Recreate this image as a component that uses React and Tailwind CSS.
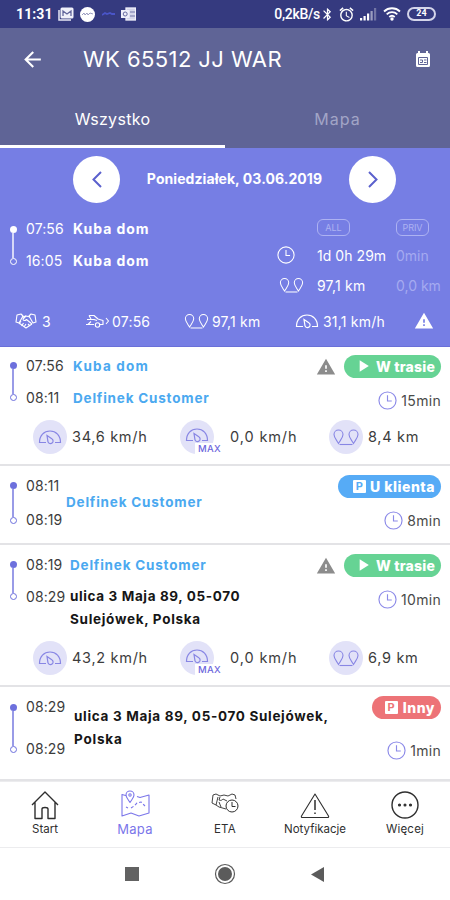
import React from "react";
import clsx from "clsx";
import { MdArrowBack, MdBluetooth, MdAlarm, MdWarning, MdPlayArrow } from "react-icons/md";

const trips = [
  {
    start: "07:56",
    end: "08:11",
    lines: [
      { text: "Kuba dom", className: "text-[#4ba9f0] tracking-[1.2px]" },
      { text: "Delfinek Customer", className: "text-[#4ba9f0] tracking-[0.8px] mt-[9px]" },
    ],
    namesClass: "left-[73px] top-[8px]",
    timesClass: "gap-[10px] pt-[8px]",
    lineClass: "h-[39px] mt-[15px]",
    rightClass: "pt-[8px] gap-[12px]",
    className: "h-[119px]",
    status: "route",
    duration: "15min",
    stats: ["34,6 km/h", "0,0 km/h", "8,4 km"],
  },
  {
    start: "08:11",
    end: "08:19",
    lines: [{ text: "Delfinek Customer", className: "text-[#4ba9f0] tracking-[0.8px]" }],
    namesClass: "left-[66px] top-[25px]",
    timesClass: "gap-[12px] pt-[9px]",
    lineClass: "h-[42px] mt-[16px]",
    rightClass: "pt-[9px] gap-[12px]",
    className: "h-[79px]",
    status: "client",
    duration: "8min",
  },
  {
    start: "08:19",
    end: "08:29",
    lines: [
      { text: "Delfinek Customer", className: "text-[#4ba9f0] tracking-[0.8px]" },
      { text: "ulica 3 Maja 89, 05-070", className: "text-[#161616] tracking-[0.62px] mt-[8px]" },
      { text: "Sulejówek, Polska", className: "text-[#161616] tracking-[0.7px]" },
    ],
    namesClass: "left-[70px] top-[9px]",
    timesClass: "gap-[10px] pt-[9px]",
    lineClass: "h-[39px] mt-[16px]",
    rightClass: "pt-[9px] gap-[12px]",
    className: "h-[142px]",
    status: "route",
    duration: "10min",
    stats: ["43,2 km/h", "0,0 km/h", "6,9 km"],
  },
  {
    start: "08:29",
    end: "08:29",
    lines: [
      { text: "ulica 3 Maja 89, 05-070 Sulejówek,", className: "text-[#161616] tracking-[0.68px]" },
      { text: "Polska", className: "text-[#161616] tracking-[0.8px]" },
    ],
    namesClass: "left-[74px] top-[18px]",
    timesClass: "gap-[20px] pt-[9px]",
    lineClass: "h-[49px] mt-[17px]",
    rightClass: "pt-[9px] gap-[21px]",
    className: "h-[94px]",
    status: "other",
    duration: "1min",
  },
];

const pills = {
  route: { text: "W trasie", className: "bg-[#66d394] w-[97px] tracking-[0.2px]" },
  client: { text: "U klienta", className: "bg-[#56abf6] w-[103px] tracking-[0.5px]" },
  other: { text: "Inny", className: "bg-[#ed7377] w-[69px] tracking-[0.5px]" },
};

function Clock({ size = 19, className }) {
  return (
    <svg width={size} height={size} viewBox="0 0 20 20" fill="none" stroke="currentColor" strokeWidth="1.2" className={className}>
      <circle cx="10" cy="10" r="9" />
      <path d="M10 4.5V10.5H14.5" />
    </svg>
  );
}

function Gauge({ className }) {
  return (
    <svg width="24" height="16" viewBox="0 0 24 16" fill="none" stroke="currentColor" strokeWidth="1.2" className={className}>
      <path d="M8 13.5H1.5C1.5 6.5 6 2 12 2s10.500 4.500 10.500 11.500H17" />
      <path d="M9 6.500l4.800 3.300a2.600 2.600 0 1 1-3.800 3z" />
    </svg>
  );
}

function Pins({ width = 25 }) {
  return (
    <svg width={width} height="17" viewBox="0 0 27 17" fill="none" stroke="currentColor" strokeWidth="1.1">
      <path d="M6 14.500C4 11 1.500 8.500 1.500 5.500a4.500 4.500 0 0 1 9 0C10.500 8.500 8 11 6 14.500z" />
      <path d="M21 14.500c-2-3.500-4.500-6-4.500-9a4.500 4.500 0 0 1 9 0c0 3-2.500 5.500-4.500 9z" />
      <path d="M7 15.500h13" />
    </svg>
  );
}

function Handshake() {
  return (
    <svg width="24" height="16" viewBox="0 0 24 16" fill="none" stroke="currentColor" strokeWidth="1.1" strokeLinejoin="round">
      <path d="M3 2l4-1 2 2-4 7-3-1z" />
      <path d="M21 2l-4-1-2 2 4 7 3-1z" />
      <path d="M8 4l4-1 4 1M12 3L9 6c0 2 2 2 3.500.5L18 11" />
      <path d="M5 10l7 5 6-4M7 8l-2 3M9.500 10l-2 3M12 11l-2 3M14 11l2 2" />
    </svg>
  );
}

function CarHand() {
  return (
    <svg width="25" height="16" viewBox="0 0 25 16" fill="none" stroke="currentColor" strokeWidth="1.1" strokeLinejoin="round">
      <path d="M4 2.500h5l4 3.500 5 1.500v4h-3M4 2.500l2 3.500M2 6.500h7l3 1M1 11.500h8M3 11.500l3-3" />
      <circle cx="12.500" cy="12" r="2.200" />
      <path d="M21 5l2.500 3-2.500 3" />
    </svg>
  );
}

function ParkingIcon({ className }) {
  return (
    <span className={clsx("flex h-[13px] w-[13px] items-center justify-center rounded-[1px] bg-white text-[11px] font-bold leading-none", className)}>
      P
    </span>
  );
}

function StatusBar() {
  return (
    <div className="flex h-7 items-center bg-[#353a7f] pl-4 pr-[14px] text-white">
      <span className="w-[36px] font-[Roboto] text-[14px] font-bold tracking-[0.1px]">11:31</span>
      <svg width="16" height="14" viewBox="0 0 16 14" className="ml-[6px]">
        <path d="M1 3v10h12" fill="none" stroke="#e8e8f6" strokeWidth="1.500" />
        <rect x="2.500" y="0.500" width="13" height="11" rx="1.500" fill="#f0f0fa" />
        <path d="M5 9V4l4 3 4-3v5" fill="none" stroke="#62669c" strokeWidth="1.300" />
      </svg>
      <span className="ml-[6px] flex h-[15px] w-[15px] items-center justify-center rounded-full bg-white">
        <svg width="11" height="5" viewBox="0 0 11 5" fill="none" stroke="#9a9cc0" strokeWidth="1">
          <path d="M0 3l2-2 1 2 2-2 1 2 2-2 3 1" />
        </svg>
      </span>
      <svg width="13" height="6" viewBox="0 0 13 6" className="ml-[7px]" fill="none" stroke="#4a55c8" strokeWidth="1.800">
        <path d="M0 4l3-2 2 1 3-1 2 1h3" />
      </svg>
      <svg width="15" height="14" viewBox="0 0 15 14" className="ml-[6px]">
        <rect x="5" y="1" width="9.500" height="12" fill="#d4d5ea" stroke="#f0f0fa" strokeWidth="1.300" />
        <path d="M9 5h5M9 9h5" stroke="#7175a8" />
        <rect y="3" width="8.500" height="8" fill="#f0f0fa" />
        <circle cx="4.200" cy="7" r="2" fill="none" stroke="#6669a0" />
      </svg>
      <span className="ml-auto font-[Roboto] text-[14px] font-medium tracking-[-0.3px]">0,2kB/s</span>
      <MdBluetooth size={15} />
      <MdAlarm size={17} className="ml-[3px]" />
      <svg width="17" height="13" viewBox="0 0 17 13" className="ml-[5px]" fill="white">
        <rect x="0" y="10" width="2.200" height="2.500" />
        <rect x="3.500" y="8" width="2.200" height="4.500" />
        <rect x="7" y="5.500" width="2.200" height="7" />
        <rect x="10.500" y="3" width="2.200" height="9.500" opacity="0.500" />
        <rect x="14" y="0" width="2.200" height="12.500" opacity="0.300" />
      </svg>
      <svg width="18" height="14" viewBox="0 0 18 14" className="ml-[6px]" fill="none" stroke="white" strokeWidth="1.800">
        <path d="M1 4.500a11.500 11.500 0 0 1 16 0M3.700 7.300a7.600 7.600 0 0 1 10.600 0M6.300 10a4 4 0 0 1 5.400 0" />
        <circle cx="9" cy="12" r="0.800" fill="white" />
      </svg>
      <span className="ml-[6px] flex h-[14px] w-[29px] items-center justify-center rounded-full border-2 border-[#d4d5ea] font-[Roboto] text-[9px] font-bold">
        24
      </span>
    </div>
  );
}

function Header() {
  return (
    <header className="flex h-[120px] flex-col bg-[#5f6496] text-white">
      <div className="flex h-[63px] items-center pl-[20px] pr-[19px]">
        <MdArrowBack size={25} />
        <h1 className="ml-[38px] whitespace-nowrap text-[22px] font-normal tracking-[0.42px]">WK 65512 JJ WAR</h1>
        <svg width="16" height="17" viewBox="0 0 16 17" className="ml-auto">
          <path d="M2.500 2h11a1.500 1.500 0 0 1 1.500 1.500v11a1.500 1.500 0 0 1-1.500 1.500h-11A1.500 1.500 0 0 1 1 14.500v-11A1.500 1.500 0 0 1 2.500 2z" fill="white" />
          <path d="M4 0v3M12 0v3" stroke="white" strokeWidth="2" />
          <path d="M3.500 6.500h9v7h-9zM5 9h2.500v2.500H5M9 9h2.500M9 11.500h2.500" fill="none" stroke="#5f6496" />
        </svg>
      </div>
      <div className="flex flex-1 text-[16px]">
        <div className="flex w-1/2 items-center justify-center border-b-[3px] border-white pt-[1px] tracking-[0.3px]">Wszystko</div>
        <div className="flex w-1/2 items-center justify-center pb-[2px] text-[#a2a5c6] tracking-[1px]">Mapa</div>
      </div>
    </header>
  );
}

function Timeline({ className, light }) {
  return (
    <div className={clsx("flex w-[8px] shrink-0 flex-col items-center", light ? "text-white" : "text-[#6d70dd]", className)}>
      <span className="h-[7px] w-[7px] shrink-0 rounded-full bg-current" />
      <span className="w-[1.5px] flex-1 bg-current opacity-70" />
      <span className="h-[7px] w-[7px] shrink-0 rounded-full border border-current" />
    </div>
  );
}

function RoundButton({ next }) {
  return (
    <button className="flex h-[47px] w-[47px] items-center justify-center rounded-full bg-white text-[#5b60cd]">
      <svg width="10" height="17" viewBox="0 0 10 17" fill="none" stroke="currentColor" strokeWidth="2">
        <path d={next ? "M1 1l7.500 7.500L1 16" : "M9 1L1.500 8.500 9 16"} />
      </svg>
    </button>
  );
}

function Summary() {
  return (
    <section className="flex h-[199px] flex-col border-b border-[#6a70d8] bg-[#767ee4] text-white">
      <div className="flex items-center justify-between pl-[73px] pr-[54px] pt-[8px]">
        <RoundButton />
        <p className="whitespace-nowrap pb-[3px] text-[14px] font-bold tracking-[0.07px]">Poniedziałek, 03.06.2019</p>
        <RoundButton next />
      </div>
      <div className="flex h-[96px] pl-[9px] pt-[12px]">
        <Timeline light className="mt-[11px] h-[39px]" />
        <div className="ml-[9px] flex w-[47px] flex-col gap-[10px] pt-[3px] text-[14px] leading-[22px] tracking-[0.1px]">
          <span>07:56</span>
          <span>16:05</span>
        </div>
        <div className="flex flex-col gap-[10px] pt-[3px] text-[14px] font-bold leading-[22px] tracking-[0.95px]">
          <span>Kuba dom</span>
          <span>Kuba dom</span>
        </div>
        <div className="ml-auto mr-[5px] grid grid-cols-[40px_79px_49px] grid-rows-[25px_30px_30px] items-center whitespace-nowrap text-[14px]">
          <span />
          <span className="flex h-[17px] w-[33px] items-center justify-center rounded-[6px] border border-[#adb2f2] text-[9px] text-[#adb2f2]">ALL</span>
          <span className="flex h-[17px] w-[33px] items-center justify-center rounded-[6px] border border-[#adb2f2] text-[9px] text-[#adb2f2]">PRIV</span>
          <Clock size={18} />
          <span className="tracking-[0.05px]">1d 0h 29m</span>
          <span className="text-[#a5aaf0]">0min</span>
          <span className="pl-[2px]"><Pins width={25} /></span>
          <span className="tracking-[0.2px]">97,1 km</span>
          <span className="text-[#a5aaf0]">0,0 km</span>
        </div>
      </div>
      <div className="mt-[9px] grid h-[26px] grid-cols-[71px_99px_111px_118px_1fr] items-center whitespace-nowrap pl-[14px] text-[14px] tracking-[0.2px]">
        <span className="flex items-center gap-[4px]"><Handshake />3</span>
        <span className="flex items-center gap-[2px]"><CarHand />07:56</span>
        <span className="flex items-center gap-[3px]"><Pins width={25} />97,1 km</span>
        <span className="flex items-center gap-[4px]"><Gauge />31,1 km/h</span>
        <MdWarning size={20} className="ml-[1px]" />
      </div>
    </section>
  );
}

function Stat({ type, text }) {
  return (
    <div className="flex items-center gap-[5px]">
      <span className="relative flex h-[34px] w-[34px] shrink-0 items-center justify-center rounded-full bg-[#e2e2f8] text-[#8886e4]">
        {type === "distance" ? <Pins width={28} /> : <Gauge className={type === "max" ? "mb-[4px]" : undefined} />}
        {type === "max" && (
          <span className="absolute left-[15px] top-[23px] bg-white px-[3px] text-[9.5px] font-medium leading-[12px] tracking-[0.3px] text-[#6c66dc]">MAX</span>
        )}
      </span>
      <span className={clsx("whitespace-nowrap pb-[1px] text-[14.5px] text-[#3c3c3c]", type === "max" ? "ml-[11px] tracking-[0.9px]" : "tracking-[0.7px]")}>{text}</span>
    </div>
  );
}

function Pill({ status }) {
  const pill = pills[status];
  return (
    <span className={clsx("flex h-[23px] items-center justify-end whitespace-nowrap rounded-full pr-[6px] pb-[1px] text-[14px] font-extrabold text-white", pill.className)}>
      {status === "route" && <MdPlayArrow size={20} className="mr-[3px]" />}
      {status === "client" && <ParkingIcon className="mr-[4px] text-[#56abf6]" />}
      {status === "other" && <ParkingIcon className="mr-[5px] text-[#ed7377]" />}
      {pill.text}
    </span>
  );
}

function Trip({ trip }) {
  return (
    <article className={clsx("relative border-b-2 border-[#e3e3e6] bg-white", trip.className)}>
      <div className="flex pl-[9px] pr-[9px]">
        <Timeline className={trip.lineClass} />
        <div className={clsx("ml-[9px] flex flex-col text-[14px] leading-[22px] tracking-[0.1px] text-[#3c3c3c]", trip.timesClass)}>
          <span>{trip.start}</span>
          <span>{trip.end}</span>
        </div>
        <div className={clsx("absolute flex flex-col whitespace-nowrap text-[13.5px] font-bold leading-[23px]", trip.namesClass)}>
          {trip.lines.map((line) => (
            <span key={line.text} className={line.className}>{line.text}</span>
          ))}
        </div>
        <div className={clsx("ml-auto flex flex-col items-end", trip.rightClass)}>
          <div className="flex items-center gap-[8px]">
            {trip.status === "route" && <MdWarning size={20} className="text-[#8c8c8c]" />}
            <Pill status={trip.status} />
          </div>
          <span className="flex h-[20px] items-center gap-[4px] text-[14px] tracking-[0.3px] text-[#4a4a4a]">
            <Clock className="text-[#8c8ae8]" />
            {trip.duration}
          </span>
        </div>
      </div>
      {trip.stats && (
        <div className="absolute bottom-[10px] left-[33px] grid grid-cols-[147px_149px_1fr]">
          <Stat text={trip.stats[0]} />
          <Stat type="max" text={trip.stats[1]} />
          <Stat type="distance" text={trip.stats[2]} />
        </div>
      )}
    </article>
  );
}

function NavItem({ label, active, className, children }) {
  return (
    <div className={clsx("flex flex-1 flex-col items-center pt-[7px]", active ? "text-[#7b76ea]" : "text-[#2f2f2f]")}>
      <svg width="32" height="32" viewBox="0 0 32 32" fill="none" stroke="currentColor" strokeWidth="1.1" strokeLinejoin="round">
        {children}
      </svg>
      <span className={clsx("whitespace-nowrap leading-[16px]", className)}>{label}</span>
    </div>
  );
}

function BottomNav() {
  return (
    <nav className="flex h-[67px] border-b border-t border-[#ececee] bg-white">
      <NavItem label="Start" className="text-[11.5px]">
        <path d="M3 16L16 3l13 13M6 13.500V29.500h7V20c0-2 6-2 6 0v9.500h7V13.500" strokeWidth="1.400" />
      </NavItem>
      <NavItem label="Mapa" active className="text-[13px] tracking-[0.3px]">
        <path d="M12 8l-9-2.500V27l9-3 8 3 10-3V6l-9 2.500-3-1" />
        <path d="M11 13.500C9 10 7 8.500 7 6a4 4 0 0 1 8 0c0 2.500-2 4-4 7.500z" fill="white" />
        <circle cx="11" cy="6" r="1.200" />
        <path d="M7 18l2 1M12 19l3-2 3-3 4-1 3 3 1 1" strokeDasharray="3 2" />
      </NavItem>
      <NavItem label="ETA" className="text-[11.5px] tracking-[0.3px]">
        <path d="M4 6l3-1 4 2 4-1 4 1 4-2 3 1 1 4M4 6l-1 8 4 2 2-8M7 16l3 2 7 2M10 13l2 5M11 8l-1 3c2 1 3 0 4-1l4 2" strokeWidth="0.900" />
        <circle cx="23" cy="17" r="6" fill="white" strokeWidth="1" />
        <path d="M23 13v4.500h3.500" strokeWidth="1" />
      </NavItem>
      <NavItem label="Notyfikacje" className="text-[11.5px]">
        <path d="M16 5L2.500 27c-.5 1 0 1.500 1 1.500h25c1 0 1.500-.5 1-1.500z" />
        <path d="M16 11v10M16 23.500V25" strokeWidth="1.500" />
      </NavItem>
      <NavItem label="Więcej" className="text-[11.5px] tracking-[0.2px]">
        <circle cx="16" cy="16" r="13" strokeWidth="1.400" />
        <circle cx="10.500" cy="16" r="1" fill="currentColor" />
        <circle cx="16" cy="16" r="1" fill="currentColor" />
        <circle cx="21.500" cy="16" r="1" fill="currentColor" />
      </NavItem>
    </nav>
  );
}

function SystemNav() {
  return (
    <div className="grid h-[52px] grid-cols-[264px_1fr] items-center bg-white">
      <div className="flex items-center justify-between pl-[125px] pr-[28px]">
        <span className="h-[14px] w-[14px] bg-[#626262]" />
        <svg width="22" height="22" viewBox="0 0 22 22" className="shrink-0">
          <circle cx="11" cy="11" r="9.500" fill="none" stroke="#5b5b5b" strokeWidth="1.200" />
          <circle cx="11" cy="11" r="7" fill="#5b5b5b" />
        </svg>
      </div>
      <svg width="13" height="15" viewBox="0 0 13 15" className="ml-[47px]">
        <path d="M13 0v15L0 7.500z" fill="#5b5b5b" />
      </svg>
    </div>
  );
}

export default function App() {
  return (
    <div className="h-[900px] w-[450px] overflow-hidden bg-white font-[Inter,sans-serif]">
      <StatusBar />
      <Header />
      <Summary />
      {trips.map((trip, index) => (
        <Trip key={index} trip={trip} />
      ))}
      <BottomNav />
      <SystemNav />
    </div>
  );
}
